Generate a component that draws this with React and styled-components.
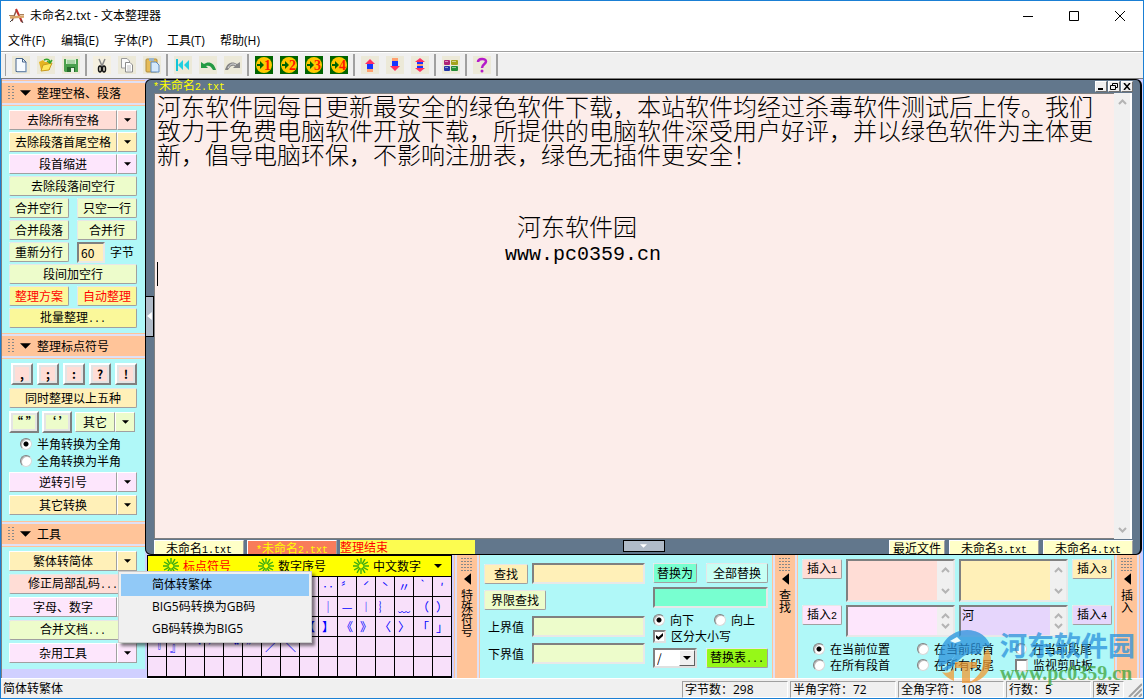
import React, { useState } from "react";
import styled, { createGlobalStyle } from "styled-components";

const ORANGE = "#ffc499";
const CYAN = "#b0f8f8";
const LAVENDER = "#dfe0f4";
const PINK = "#ffddd6";
const CREAM = "#fff0b8";
const LILAC = "#fde6fc";
const LIME = "#edfccb";
const LEMON = "#faf89a";

const GlobalStyle = createGlobalStyle`
  * { box-sizing: border-box; }
  body { margin: 0; }
  button, input, select, textarea {
    font: inherit;
    color: inherit;
    margin: 0;
    padding: 0;
    border-radius: 0;
    outline: none;
  }
`;

const Window = styled.div`
  position: relative;
  display: flex;
  flex-direction: column;
  min-height: 100vh;
  border: 1px solid #1a7fd4;
  background: #f0f0f0;
  color: #000;
  font-family: "Noto Sans CJK SC", sans-serif;
  font-size: 12px;
  line-height: 16px;
`;

const Mono = styled.span`
  font-family: "Liberation Mono", monospace;
  font-size: 10px;
`;

/* title bar and menu */

const TitleBar = styled.header`
  display: flex;
  align-items: center;
  height: 30px;
  padding-left: 8px;
  gap: 5px;
  background: #fff;
  font-family: "Open Sans", "Noto Sans CJK SC", sans-serif;
`;

const Title = styled.h1`
  flex: 1;
  margin: 0;
  font-size: 12px;
  font-weight: 400;
`;

const CaptionButtons = styled.div`
  display: flex;
`;

const CaptionButton = styled.button`
  display: flex;
  align-items: center;
  justify-content: center;
  width: 46px;
  height: 30px;
  border: none;
  background: transparent;
`;

const MenuBar = styled.nav`
  display: flex;
  height: 20px;
  background: #fff;
  font-family: "Open Sans", "Noto Sans CJK SC", sans-serif;
`;

const MenuItem = styled.button`
  width: 53px;
  padding-left: 7px;
  border: none;
  background: transparent;
  text-align: left;
  white-space: nowrap;
`;

/* toolbar */

const Toolbar = styled.div`
  display: flex;
  align-items: center;
  height: 28px;
  border-top: 1px solid #a0a0a0;
  border-bottom: 1px solid #808080;
  box-shadow: inset 0 1px 0 #fff;
`;

const ToolGroup = styled.div`
  display: flex;
  height: 22px;
  padding: 0 2px;
  border-right: 2px solid #a0a0a0;
  &:first-child {
    margin-left: 4px;
    border-left: 1px solid #a0a0a0;
  }
`;

const ToolButton = styled.button`
  display: flex;
  align-items: center;
  justify-content: center;
  width: 25px;
  border: none;
  background: transparent;
`;

/* body */

const Body = styled.div`
  flex: 1;
  display: flex;
`;

const Sidebar = styled.aside`
  flex: none;
  width: 144px;
  padding-top: 1px;
  border-left: 1px solid #808080;
  background: #d0d0ff;
`;

const SectionHead = styled.button`
  display: flex;
  align-items: center;
  width: 100%;
  height: 26px;
  gap: 6px;
  padding: 0 6px;
  border: solid ${ORANGE};
  border-width: 1px 0;
  background: ${ORANGE};
  box-shadow: inset 0 2px 0 ${LAVENDER}, inset 0 -2px 0 ${LAVENDER};
  text-align: left;
`;

const Section = styled.div`
  display: flex;
  flex-direction: column;
  gap: ${(p) => p.$gap}px;
  padding: 4px 8px ${(p) => p.$gap + 3}px 7px;
  background: ${CYAN};
`;

const Row = styled.div`
  position: relative;
  display: flex;
  align-items: center;
  justify-content: ${(p) => (p.$spread ? "space-between" : "flex-start")};
  gap: ${(p) => p.$gap || 0}px;
  padding-left: ${(p) => p.$indent || 0}px;
`;

const Button = styled.button`
  flex: ${(p) => (p.$width ? "none" : 1)};
  width: ${(p) => (p.$width ? p.$width + "px" : "auto")};
  height: 20px;
  border: 1px solid;
  border-color: #fff #a0a0a0 #a0a0a0 #fff;
  border-radius: 2px;
  outline: 1px solid rgba(160, 160, 160, 0.25);
  outline-offset: -1px;
  background: ${(p) => p.$bg || LIME};
  color: ${(p) => p.$color || "#000"};
  line-height: 16px;
  white-space: nowrap;
`;

const SplitPart = styled.button`
  display: flex;
  align-items: center;
  justify-content: center;
  flex: ${(p) => (p.$arrow ? "none" : 1)};
  width: ${(p) => (p.$arrow ? "20px" : "auto")};
  height: 20px;
  border: 1px solid;
  border-color: #fff #a0a0a0 #a0a0a0 #fff;
  background: ${(p) => p.$bg};
  white-space: nowrap;
`;

const SplitBox = styled.div`
  display: flex;
  flex: ${(p) => (p.$width ? "none" : 1)};
  width: ${(p) => (p.$width ? p.$width + "px" : "auto")};
`;

const RaisedButton = styled.button`
  width: ${(p) => p.$width}px;
  height: 22px;
  border: 2px solid;
  border-color: #fff #808080 #808080 #fff;
  box-shadow: inset 0 0 0 2px #e4e4e4;
  background: ${(p) => p.$bg};
  font-weight: 700;
  line-height: 16px;
`;

const Field = styled.input`
  width: ${(p) => (p.$width ? p.$width + "px" : "100%")};
  height: 21px;
  padding: 0 2px;
  border: 2px solid;
  border-color: #808080 #e8e8e8 #e8e8e8 #808080;
  background: ${(p) => p.$bg};
`;

const Choice = styled.label`
  display: flex;
  align-items: center;
  gap: 5px;
  height: 16px;
  white-space: nowrap;
`;

const Radio = styled.input.attrs({ type: "radio" })`
  appearance: none;
  width: 12px;
  height: 12px;
  border: 1px solid;
  border-color: #808080 #d8d8d8 #d8d8d8 #808080;
  border-radius: 50%;
  background: #fff;
  box-shadow: inset 1px 1px 0 #b8b8b8;
  &:checked {
    background: radial-gradient(circle, #000 0 2px, #fff 3px);
  }
`;

const CheckBox = styled.span`
  position: relative;
  display: flex;
  width: 13px;
  height: 13px;
  svg {
    position: absolute;
    left: 3px;
    top: 3px;
    pointer-events: none;
  }
`;

const CheckInput = styled.input.attrs({ type: "checkbox" })`
  appearance: none;
  width: 13px;
  height: 13px;
  border: 2px solid;
  border-color: #808080 #e0e0e0 #e0e0e0 #808080;
  background: #fff;
`;

const RadioGroup = styled.div`
  display: flex;
  flex-direction: column;
  gap: 1px;
  padding-left: 11px;
`;

const Popup = styled.div`
  position: absolute;
  z-index: 2;
  top: 20px;
  left: 109px;
  width: 194px;
  padding: 2px;
  border: 1px solid #ccc;
  background: #f0f0f0;
  box-shadow: 3px 3px 3px rgba(0, 0, 0, 0.5);
  font-family: "Open Sans", "Noto Sans CJK SC", sans-serif;
`;

const PopupItem = styled.button`
  display: block;
  width: 100%;
  height: 22px;
  padding-left: 31px;
  border: none;
  background: ${(p) => (p.$active ? "#91c9f7" : "transparent")};
  text-align: left;
`;

/* editor */

const Main = styled.main`
  flex: 1;
  min-width: 0;
  display: flex;
  flex-direction: column;
  background: #d0d0ff;
`;

const EditorFrame = styled.section`
  flex: 1;
  display: flex;
  flex-direction: column;
  margin-right: 1px;
  border: solid #000;
  border-width: 1px 2px 1px 1px;
  border-radius: 6px;
  background: #62778c;
`;

const EditorTitle = styled.div`
  display: flex;
  align-items: center;
  height: 13px;
  padding: 0 7px;
  color: #ff0;
`;

const EditorName = styled.span`
  flex: 1;
`;

const TinyButton = styled.button`
  display: flex;
  align-items: center;
  justify-content: center;
  width: 12px;
  height: 11px;
  margin-left: 1px;
  border: 1px solid;
  border-color: #fff #707070 #707070 #fff;
  background: #f0f0f0;
`;

const EditorMiddle = styled.div`
  flex: 1;
  display: flex;
  padding-right: 8px;
`;

const EditorGutter = styled.div`
  display: flex;
  align-items: center;
  width: 8px;
`;

const SideHandle = styled.button`
  display: flex;
  align-items: center;
  justify-content: center;
  width: 8px;
  height: 41px;
  border: 1px solid #000;
  border-left: none;
  background: #b0bbc8;
`;

const Paper = styled.div`
  flex: 1;
  padding: 0 0 0 2px;
  border: 1px solid #808080;
  border-right: none;
  background: #fcedea;
  font-size: 24px;
  font-weight: 300;
  line-height: 24px;
  white-space: pre-wrap;
  outline: none;
`;

const PaperLine = styled.p`
  margin: 0;
  min-height: 24px;
  height: ${(p) => (p.$single ? "24px" : "auto")};
`;

const PaperMono = styled.span`
  font-family: "Liberation Mono", monospace;
  font-size: 20px;
  font-weight: 400;
`;

const Caret = styled.span`
  display: block;
  width: 1px;
  height: 24px;
  background: #000;
`;

const ScrollTrack = styled.div`
  display: flex;
  flex: none;
  flex-direction: column;
  justify-content: space-between;
  align-items: center;
  width: ${(p) => (p.$thin ? 16 : 18)}px;
  padding: 6px 0;
  background: #f0f0f0;
  border-right: ${(p) => (p.$thin ? "none" : "2px solid #fff")};
`;

const TabRow = styled.div`
  display: flex;
  align-items: stretch;
  height: 14px;
  padding: 0 7px 0 8px;
  margin-top: 1px;
`;

const TabSide = styled.div`
  flex: 1;
  display: flex;
  gap: ${(p) => (p.$end ? 4 : 3)}px;
  justify-content: ${(p) => (p.$end ? "flex-end" : "flex-start")};
`;

const FileTab = styled.button`
  width: ${(p) => (p.$small ? 56 : 90)}px;
  border: 1px solid;
  border-color: #fff #a0a0a0 #a0a0a0 #fff;
  border-bottom: none;
  background: ${(p) => (p.$active ? "#f87c5a" : "#ffffc8")};
  color: ${(p) => (p.$active ? "#ff0" : "#000")};
  line-height: 14px;
  white-space: nowrap;
`;

const Notice = styled.output`
  width: 135px;
  background: #fcfc50;
  color: #f00;
  line-height: 14px;
`;

const BottomHandle = styled.button`
  display: flex;
  align-items: center;
  justify-content: center;
  width: 42px;
  height: 12px;
  border: 1px solid #000;
  background: #b0bbc8;
`;

/* bottom docks */

const Docks = styled.div`
  display: flex;
  height: 123px;
  padding: 0 3px 0 2px;
`;

const SymbolPanel = styled.section`
  flex: none;
  width: 305px;
  border-top: 1px solid #000;
  background: #000;
`;

const SymbolHead = styled.div`
  display: flex;
  align-items: center;
  height: 20px;
  padding-left: 15px;
  border-left: 1px solid #000;
  border-right: 1px solid #000;
  background: #ff0;
`;

const SymbolTab = styled.button`
  display: flex;
  align-items: center;
  gap: 4px;
  width: 95px;
  border: none;
  background: transparent;
  color: ${(p) => (p.$active ? "#f00" : "#000")};
  margin-right: ${(p) => (p.$last ? "-14px" : 0)};
`;

const PlainButton = styled.button`
  display: flex;
  border: none;
  background: transparent;
`;

const SymbolGrid = styled.div`
  display: grid;
  grid-template-columns: repeat(16, 18px);
  grid-auto-rows: 19px;
  gap: 1px;
  padding: 1px;
`;

const SymbolKey = styled.button`
  border: none;
  background: #f8e0fa;
  color: #00f;
  line-height: 18px;
  overflow: hidden;
`;

const Strip = styled.button`
  display: flex;
  flex-direction: column;
  align-items: center;
  flex: none;
  width: 26px;
  margin-left: ${(p) => p.$gap || 0}px;
  padding-top: 3px;
  border: solid ${ORANGE};
  border-width: 0 1px;
  background: ${ORANGE};
  box-shadow: inset 2px 0 0 ${LAVENDER}, inset -2px 0 0 ${LAVENDER};
`;

const StripText = styled.span`
  width: 12px;
  margin-top: 4px;
  line-height: 12px;
  word-break: break-all;
`;

const SearchPanel = styled.section`
  display: flex;
  flex: none;
  width: 292px;
  gap: 8px;
  padding: 8px 4px;
  background: ${CYAN};
`;

const SearchColumn = styled.div`
  display: flex;
  flex-direction: column;
  gap: ${(p) => p.$gap}px;
  width: ${(p) => p.$width}px;
`;

const FieldLabel = styled.label`
  flex: none;
  width: 44px;
  padding-left: 4px;
`;

const SelectBox = styled.span`
  position: relative;
  display: flex;
`;

const Select = styled.select`
  appearance: none;
  width: 44px;
  height: 20px;
  padding-left: 2px;
  border: 2px solid;
  border-color: #808080 #e0e0e0 #e0e0e0 #808080;
  background: #fff;
`;

const SelectArrow = styled.span`
  position: absolute;
  right: 2px;
  top: 2px;
  display: flex;
  align-items: center;
  justify-content: center;
  width: 16px;
  height: 16px;
  border: 1px solid;
  border-color: #fff #606060 #606060 #fff;
  background: #f0f0f0;
  pointer-events: none;
`;

const InsertPanel = styled.section`
  flex: 1;
  min-width: 0;
  padding: 4px 2px 4px 4px;
  background: ${CYAN};
`;

const InsertGrid = styled.div`
  display: grid;
  grid-template-columns: 40px minmax(0, 1fr) minmax(0, 1fr) 40px;
  grid-template-rows: 43px 32px;
  gap: 3px 4px;
`;

const AreaBox = styled.div`
  display: flex;
  min-width: 0;
  border: 2px solid;
  border-color: #808080 #e8e8e8 #e8e8e8 #808080;
`;

const Area = styled.textarea`
  flex: 1;
  min-width: 0;
  height: 100%;
  border: none;
  padding: 0 1px;
  resize: none;
  overflow: hidden;
  background: ${(p) => p.$bg};
`;

const ChoiceGrid = styled.div`
  display: grid;
  grid-template-columns: 104px 98px 1fr;
  padding: 4px 0 0 11px;
`;

/* status bar */

const StatusBar = styled.footer`
  display: flex;
  align-items: center;
  height: 20px;
  gap: 2px;
  padding: 1px 1px 0 2px;
  border-top: 1px solid #fff;
  font-family: "Open Sans", "Noto Sans CJK SC", sans-serif;
`;

const StatusText = styled.span`
  flex: 1;
`;

const StatusCell = styled.span`
  width: ${(p) => p.$width}px;
  height: 17px;
  padding-left: 2px;
  border: 1px solid;
  border-color: #a0a0a0 #fff #fff #a0a0a0;
  white-space: nowrap;
`;

/* watermark */

const Watermark = styled.div`
  position: absolute;
  z-index: 3;
  right: 8px;
  bottom: 13px;
  display: flex;
  gap: 6px;
  pointer-events: none;
  opacity: 0.75;
`;

const WatermarkText = styled.div`
  font-size: 27px;
  font-weight: 700;
  line-height: 32px;
  color: #2a92dc;
`;

const WatermarkUrl = styled.div`
  font-family: "Liberation Serif", serif;
  font-size: 20px;
  font-weight: 700;
  line-height: 24px;
  color: #3fa53c;
`;

const Down = ({ size = 7, color = "#000" }) => (
  <svg width={size} height={Math.ceil(size / 2)} viewBox="0 0 8 4">
    <path d="M0 0h8L4 4z" fill={color} />
  </svg>
);

const Left = ({ w = 7, h = 12, color = "#000" }) => (
  <svg width={w} height={h} viewBox="0 0 6 10">
    <path d="M6 0v10L0 5z" fill={color} />
  </svg>
);

const Chevron = ({ up }) => (
  <svg width="9" height="6" viewBox="0 0 9 6">
    <path
      d={up ? "M1 5l3.500-3.500L8 5" : "M1 1l3.500 3.500L8 1"}
      fill="none"
      stroke="#b4b4b4"
      strokeWidth="2"
    />
  </svg>
);

const Grip = ({ cols, rows }) => (
  <svg width={cols * 3} height={rows * 3}>
    {Array.from({ length: cols * rows }, (_, i) => (
      <rect
        key={i}
        x={(i % cols) * (cols === 2 ? 4 : 3)}
        y={Math.floor(i / cols) * 3}
        width="2"
        height="1"
        fill="#888"
      />
    ))}
  </svg>
);

const Burst = () => (
  <svg width="16" height="16" viewBox="0 0 15 15" stroke="#3cae12" strokeWidth="1.300">
    {[0, 30, 60, 90, 120, 150].map((a) => (
      <path
        key={a}
        d="M7.500 0v5.500M7.500 9.500v5.500"
        transform={`rotate(${a} 7.500 7.500)`}
      />
    ))}
  </svg>
);

const AppIcon = () => (
  <svg width="16" height="16" viewBox="0 0 16 16" fill="none">
    <path d="M7.500 2L3 13" stroke="#8c5a4c" strokeWidth="1.500" />
    <path d="M7 1l6 13" stroke="#c22f2a" strokeWidth="2" />
    <path d="M1 9.500l14-1" stroke="#d8a468" strokeWidth="2.500" />
    <path d="M0 7.500h5M11 6.500h4" stroke="#a8805c" />
    <path d="M1 14l3-3M12 12l2 3" stroke="#444" />
  </svg>
);

const Tile = ({ bg = "#ece9d8", children }) => (
  <svg width="18" height="18" viewBox="0 0 18 18" fill="none">
    <rect width="18" height="18" fill={bg} />
    {children}
  </svg>
);

const icons = {
  新建: (
    <Tile>
      <path d="M4 2.500h6.500L14 6v9.500H4z" fill="#f6fbff" stroke="#46658c" />
      <path d="M10.500 2.500V6H14" stroke="#46658c" />
      <path d="M14.500 7v9H5" stroke="#9db4cc" />
    </Tile>
  ),
  打开: (
    <Tile>
      <path d="M2 6l4-2 2 2h5v8H4z" fill="#e5b321" />
      <path d="M4 15l2-6 9-2-3 7z" fill="#ffe65c" stroke="#c8991c" />
      <path d="M7 4c4-2 6 0 6 3M10 5l3 2 2-3" stroke="#35a52b" strokeWidth="1.500" />
    </Tile>
  ),
  保存: (
    <Tile>
      <path d="M2 3h14v13H3l-1-1z" fill="#4ba04d" />
      <path d="M4 3h10v5H4z" fill="#d4f0cd" />
      <path d="M5 5h8M5 7h8" stroke="#80b77e" />
      <path d="M5 11h8v5H5z" fill="#266b2c" />
      <path d="M9 12h3v4H9z" fill="#ebf5e6" />
    </Tile>
  ),
  剪切: (
    <Tile bg="#f5f0e0">
      <path d="M6 3l3.500 8M12 3L8.500 11" stroke="#888" strokeWidth="1.500" />
      <ellipse cx="7" cy="13" rx="1.500" ry="3" stroke="#111" strokeWidth="1.500" />
      <ellipse cx="11" cy="13" rx="1.500" ry="3" stroke="#111" strokeWidth="1.500" />
    </Tile>
  ),
  复制: (
    <Tile>
      <path d="M3.500 2.500H9L11.500 5v7h-8z" fill="#fafafa" stroke="#9b9b9b" />
      <path d="M7.500 6.500H12l2.500 2.500v7h-7z" fill="#fff" stroke="#8b8b8b" />
      <path d="M9 10h4M9 12h4M9 14h4" stroke="#c2c2c2" />
    </Tile>
  ),
  粘贴: (
    <Tile>
      <rect x="3" y="3" width="11" height="13" rx="1" fill="#e6bc58" stroke="#b08c3c" />
      <path d="M6 2h5v3H6z" fill="#9db7cf" />
      <path d="M8 6h5l3 3v7H8z" fill="#d4e8fc" stroke="#5d8ac0" />
    </Tile>
  ),
  首行: (
    <Tile>
      <path d="M3 3v12" stroke="#13c4d8" strokeWidth="2" />
      <path d="M9 4v10L4 9zM15 4v10l-5-5z" fill="#20cfe0" />
    </Tile>
  ),
  撤销: (
    <Tile>
      <path d="M2 6v6h7L7 10c3-1 5 0 7 4h3C15 6 9 5 5 8z" fill="#249a43" />
    </Tile>
  ),
  重做: (
    <Tile>
      <path d="M16 6v6H9l2-2c-3-1-5 0-7 4H1C3 6 9 5 13 8z" fill="#858585" />
      <path d="M4 12c2-4 5-5 8-3" stroke="#e4e4e4" />
    </Tile>
  ),
  上移: (
    <Tile>
      <path d="M9 3l5 5H4z" fill="#ff2f62" />
      <path d="M6 8h6v5H6z" fill="#1536ff" />
      <path d="M6 13h6v3H6z" fill="#ffa070" />
    </Tile>
  ),
  下移: (
    <Tile>
      <path d="M6 2h6v3H6z" fill="#ffa070" />
      <path d="M6 5h6v5H6z" fill="#1536ff" />
      <path d="M4 10h10l-5 5z" fill="#ff2f62" />
    </Tile>
  ),
  居中: (
    <Tile>
      <path d="M9 2l5 4H4zM4 12h10l-5 4z" fill="#ff2f62" />
      <path d="M6 6h6v2H6zM6 10h6v2H6z" fill="#1536ff" />
      <path d="M6 9h6" stroke="#ffa070" strokeWidth="2" />
    </Tile>
  ),
  配色: (
    <Tile>
      <rect x="2" y="4" width="6" height="5" rx="1" fill="#ad2378" />
      <rect x="9" y="4" width="7" height="5" rx="1" fill="#a3a31d" />
      <rect x="2" y="10" width="6" height="5" rx="1" fill="#2537a8" />
      <rect x="9" y="10" width="7" height="5" rx="1" fill="#248d35" />
      <path d="M3 5.500h3M10 5.500h4M3 11.500h3M10 11.500h4" stroke="#fff" opacity=".5" />
    </Tile>
  ),
  帮助: (
    <Tile>
      <path
        d="M5 6c0-4 8-4 8-.5C13 8 9 8 9 12"
        stroke="#b51bc9"
        strokeWidth="2.500"
      />
      <circle cx="9" cy="15" r="1.500" fill="#b51bc9" />
    </Tile>
  ),
};

[1, 2, 3, 4].forEach((n) => {
  icons["方案" + n] = (
    <Tile bg="#006400">
      <circle cx="9" cy="9" r="8" fill="#ffc800" />
      <path d="M2 8h3V5l4 4-4 4v-3H2z" fill="#006400" />
      <text
        x="9"
        y="14"
        fill="#ff1800"
        stroke="none"
        fontFamily="Liberation Serif, serif"
        fontWeight="700"
        fontSize="14"
      >
        {n}
      </text>
    </Tile>
  );
});

const toolGroups = [
  ["新建", "打开", "保存"],
  ["剪切", "复制", "粘贴"],
  ["首行", "撤销", "重做"],
  ["方案1", "方案2", "方案3", "方案4"],
  ["上移", "下移", "居中"],
  ["配色"],
  ["帮助"],
];

// the first cells of the upper rows stay empty while the menu is open over them
const blank = (n) => Array(n).fill("");
const symbols = [
  ...blank(8), "．", "‥", "〞", "ˊ", "ˋ", "〃", "‵", "′",
  ...blank(8), "┤", "｜", "—", "︱", "︴", "﹏", "（", "）",
  ...blank(8), "【", "】", "《", "》", "〈", "〉", "「", "」",
  "『", "』", "‘", "’", "“", "”", "／", "＼",
  ...blank(24),
];

function Split({ bg, width, children }) {
  return (
    <SplitBox $width={width}>
      <SplitPart $bg={bg}>{children}</SplitPart>
      <SplitPart $bg={bg} $arrow aria-label="更多">
        <Down />
      </SplitPart>
    </SplitBox>
  );
}

function Head({ children }) {
  return (
    <SectionHead>
      <Grip cols={2} rows={5} />
      <Down size={11} />
      {children}
    </SectionHead>
  );
}

function DockStrip({ gap, children }) {
  return (
    <Strip $gap={gap}>
      <Grip cols={4} rows={5} />
      <Left />
      <StripText>{children}</StripText>
    </Strip>
  );
}

function InsertArea({ bg, label, text = "" }) {
  return (
    <AreaBox>
      <Area $bg={bg} aria-label={label} defaultValue={text} />
      <ScrollTrack $thin>
        <Chevron up />
        <Chevron />
      </ScrollTrack>
    </AreaBox>
  );
}

function Check({ checked, onChange, children }) {
  return (
    <Choice>
      <CheckBox>
        <CheckInput checked={checked} onChange={onChange} />
        {checked && (
          <svg width="7" height="7" viewBox="0 0 7 7">
            <path d="M0 2l2.500 2L7 0v3L2.500 7 0 5z" />
          </svg>
        )}
      </CheckBox>
      {children}
    </Choice>
  );
}

export default function App() {
  const [matchCase, setMatchCase] = useState(true);
  const [watch, setWatch] = useState(false);

  return (
    <Window>
      <GlobalStyle />
      <TitleBar>
        <AppIcon />
        <Title>未命名2.txt - 文本整理器</Title>
        <CaptionButtons>
          <CaptionButton aria-label="最小化">
            <svg width="10" height="10"><path d="M0 5.500h10" stroke="#000" /></svg>
          </CaptionButton>
          <CaptionButton aria-label="最大化">
            <svg width="10" height="10"><path d="M.5.5h9v9h-9z" fill="none" stroke="#000" /></svg>
          </CaptionButton>
          <CaptionButton aria-label="关闭">
            <svg width="10" height="10"><path d="M0 0l10 10M10 0L0 10" stroke="#000" /></svg>
          </CaptionButton>
        </CaptionButtons>
      </TitleBar>
      <MenuBar>
        {["文件(F)", "编辑(E)", "字体(P)", "工具(T)", "帮助(H)"].map((m) => (
          <MenuItem key={m}>{m}</MenuItem>
        ))}
      </MenuBar>
      <Toolbar>
        {toolGroups.map((group) => (
          <ToolGroup key={group[0]}>
            {group.map((name) => (
              <ToolButton key={name} aria-label={name}>
                {icons[name]}
              </ToolButton>
            ))}
          </ToolGroup>
        ))}
      </Toolbar>

      <Body>
        <Sidebar>
          <Head>整理空格、段落</Head>
          <Section $gap={2}>
            <Split bg={PINK}>去除所有空格</Split>
            <Split bg={CREAM}>去除段落首尾空格</Split>
            <Split bg={LILAC}>段首缩进</Split>
            <Row><Button>去除段落间空行</Button></Row>
            <Row $gap={8}>
              <Button>合并空行</Button>
              <Button>只空一行</Button>
            </Row>
            <Row $gap={8}>
              <Button>合并段落</Button>
              <Button>合并行</Button>
            </Row>
            <Row $gap={8}>
              <Button $width={60}>重新分行</Button>
              <Choice>
                <Field $width={28} $bg={CREAM} defaultValue="60" />
                字节
              </Choice>
            </Row>
            <Row><Button>段间加空行</Button></Row>
            <Row $gap={8}>
              <Button $bg={LEMON} $color="#f00">整理方案</Button>
              <Button $bg={LEMON} $color="#f00">自动整理</Button>
            </Row>
            <Row><Button $bg={LEMON}>批量整理<Mono>...</Mono></Button></Row>
          </Section>

          <Head>整理标点符号</Head>
          <Section $gap={3}>
            <Row $gap={4} $indent={2}>
              {[",", ";", ":", "?", "!"].map((c) => (
                <RaisedButton key={c} $width={22} $bg={PINK}>{c}</RaisedButton>
              ))}
            </Row>
            <Row><Button $bg={CREAM}>同时整理以上五种</Button></Row>
            <Row $gap={3}>
              <RaisedButton $width={30} $bg={LIME}>“ ”</RaisedButton>
              <RaisedButton $width={30} $bg={LIME}>‘ ’</RaisedButton>
              <Split bg={LIME} width={60}>其它</Split>
            </Row>
            <RadioGroup>
              <Choice><Radio name="width" defaultChecked />半角转换为全角</Choice>
              <Choice><Radio name="width" />全角转换为半角</Choice>
            </RadioGroup>
            <Split bg={LILAC}>逆转引号</Split>
            <Split bg={CREAM}>其它转换</Split>
          </Section>

          <Head>工具</Head>
          <Section $gap={3}>
            <Row>
              <Split bg={CREAM}>繁体转简体</Split>
              <Popup>
                <PopupItem $active>简体转繁体</PopupItem>
                <PopupItem>BIG5码转换为GB码</PopupItem>
                <PopupItem>GB码转换为BIG5</PopupItem>
              </Popup>
            </Row>
            <Row><Button $bg={PINK}>修正局部乱码<Mono>...</Mono></Button></Row>
            <Split bg={LILAC}>字母、数字</Split>
            <Row><Button>合并文档<Mono>...</Mono></Button></Row>
            <Split bg={LILAC}>杂用工具</Split>
          </Section>
        </Sidebar>

        <Main>
          <EditorFrame>
            <EditorTitle>
              <EditorName><Mono>*</Mono>未命名<Mono>2.txt</Mono></EditorName>
              <TinyButton aria-label="最小化文档">
                <svg width="8" height="7"><path d="M1 5h5v2H1z" /></svg>
              </TinyButton>
              <TinyButton aria-label="还原文档">
                <svg width="8" height="7" fill="none" stroke="#000">
                  <path d="M2.500 3V.5h5v4H6M.5 2.500h5v4h-5z" />
                </svg>
              </TinyButton>
              <TinyButton aria-label="关闭文档">
                <svg width="8" height="7"><path d="M1 0l6 7M7 0L1 7" stroke="#000" strokeWidth="1.500" /></svg>
              </TinyButton>
            </EditorTitle>
            <EditorMiddle>
              <EditorGutter>
                <SideHandle aria-label="收起侧栏">
                  <Left w={5} h={8} color="#fff" />
                </SideHandle>
              </EditorGutter>
              <Paper
                role="textbox"
                aria-label="正文"
                aria-multiline="true"
                contentEditable
                suppressContentEditableWarning
                spellCheck={false}
              >
                <PaperLine>
                  河东软件园每日更新最安全的绿色软件下载，本站软件均经过杀毒软件测试后上传。我们致力于免费电脑软件开放下载，所提供的电脑软件深受用户好评，并以绿色软件为主体更新，倡导电脑环保，不影响注册表，绿色无插件更安全！
                </PaperLine>
                <PaperLine />
                <PaperLine />
                <PaperLine $single>{"\u3000".repeat(15)}河东软件园</PaperLine>
                <PaperLine $single>
                  <PaperMono>{" ".repeat(29)}www.pc0359.cn</PaperMono>
                </PaperLine>
                <PaperLine><Caret /></PaperLine>
              </Paper>
              <ScrollTrack>
                <Chevron up />
                <Chevron />
              </ScrollTrack>
            </EditorMiddle>
            <TabRow>
              <TabSide>
                <FileTab>未命名<Mono>1.txt</Mono></FileTab>
                <FileTab $active><Mono>*</Mono>未命名<Mono>2.txt</Mono></FileTab>
                <Notice>整理结束</Notice>
              </TabSide>
              <BottomHandle aria-label="收起底栏">
                <Down color="#fff" />
              </BottomHandle>
              <TabSide $end>
                <FileTab $small>最近文件</FileTab>
                <FileTab>未命名<Mono>3.txt</Mono></FileTab>
                <FileTab>未命名<Mono>4.txt</Mono></FileTab>
              </TabSide>
            </TabRow>
          </EditorFrame>

          <Docks>
            <SymbolPanel>
              <SymbolHead>
                <SymbolTab $active><Burst />标点符号</SymbolTab>
                <SymbolTab><Burst />数字序号</SymbolTab>
                <SymbolTab $last><Burst />中文数字</SymbolTab>
                <PlainButton aria-label="更多符号"><Down size={8} /></PlainButton>
              </SymbolHead>
              <SymbolGrid>
                {symbols.map((s, i) => (
                  <SymbolKey key={i}>{s}</SymbolKey>
                ))}
              </SymbolGrid>
            </SymbolPanel>
            <DockStrip gap={2}>特殊符号</DockStrip>

            <SearchPanel>
              <SearchColumn $width={161} $gap={6}>
                <Row $gap={4}>
                  <Button $width={44} $bg={CREAM}>查找</Button>
                  <Field $bg={CREAM} aria-label="查找" />
                </Row>
                <Row><Button $width={62}>界限查找</Button></Row>
                <Row $gap={4}>
                  <FieldLabel htmlFor="upper">上界值</FieldLabel>
                  <Field id="upper" $bg={LIME} />
                </Row>
                <Row $gap={4}>
                  <FieldLabel htmlFor="lower">下界值</FieldLabel>
                  <Field id="lower" $bg={LIME} />
                </Row>
              </SearchColumn>
              <SearchColumn $width={115} $gap={4}>
                <Row $spread>
                  <Button $width={44} $bg="#78ffd0">替换为</Button>
                  <Button $width={62} $bg="#c8fff4">全部替换</Button>
                </Row>
                <Field $bg="#78ffd0" aria-label="替换为" />
                <div>
                  <Row $gap={20}>
                    <Choice><Radio name="dir" defaultChecked />向下</Choice>
                    <Choice><Radio name="dir" />向上</Choice>
                  </Row>
                  <Check checked={matchCase} onChange={(e) => setMatchCase(e.target.checked)}>
                    区分大小写
                  </Check>
                </div>
                <Row $spread>
                  <SelectBox>
                    <Select aria-label="分隔符">
                      <option>/</option>
                    </Select>
                    <SelectArrow><Down size={8} /></SelectArrow>
                  </SelectBox>
                  <Button $width={62} $bg="#96f818">替换表<Mono>...</Mono></Button>
                </Row>
              </SearchColumn>
            </SearchPanel>
            <DockStrip>查找</DockStrip>

            <InsertPanel>
              <InsertGrid>
                <Button $bg={PINK}>插入<Mono>1</Mono></Button>
                <InsertArea bg={PINK} label="插入1内容" />
                <InsertArea bg={CREAM} label="插入3内容" />
                <Button $bg={CREAM}>插入<Mono>3</Mono></Button>
                <Button $bg={LILAC}>插入<Mono>2</Mono></Button>
                <InsertArea bg={LILAC} label="插入2内容" />
                <InsertArea bg="#e6d6fc" label="插入4内容" text="河" />
                <Button $bg="#e6d6fc">插入<Mono>4</Mono></Button>
              </InsertGrid>
              <ChoiceGrid>
                <Choice><Radio name="place" defaultChecked />在当前位置</Choice>
                <Choice><Radio name="place" />在当前段首</Choice>
                <Choice><Radio name="place" />在当前段尾</Choice>
                <Choice><Radio name="place" />在所有段首</Choice>
                <Choice><Radio name="place" />在所有段尾</Choice>
                <Check checked={watch} onChange={(e) => setWatch(e.target.checked)}>
                  监视剪贴板
                </Check>
              </ChoiceGrid>
            </InsertPanel>
            <DockStrip>插入</DockStrip>
          </Docks>
        </Main>
      </Body>

      <StatusBar>
        <StatusText>简体转繁体</StatusText>
        <StatusCell $width={106}>字节数：298</StatusCell>
        <StatusCell $width={106}>半角字符：72</StatusCell>
        <StatusCell $width={106}>全角字符：108</StatusCell>
        <StatusCell $width={85}>行数：5</StatusCell>
        <StatusCell $width={31}>数字</StatusCell>
        <svg width="16" height="16">
          <path d="M3 16L16 3M8 16l8-8M13 16l3-3" stroke="#a0a0a0" strokeWidth="2" />
        </svg>
      </StatusBar>

      <Watermark>
        <svg width="56" height="56" viewBox="0 0 56 56">
          <path d="M1 38C-2 16 12 1 29 1c12 0 21 7 24 17l-8-1c-3 6-8 3-13 3-8 0-13 3-17 9-4 5-9 7-14 9z" fill="#2a92dc" />
          <path d="M3 40c5-1 9-6 12-11 3-5 8-9 17-9l14-3-4 8H31c-7 1-11 8-17 13-3 3-7 4-11 2z" fill="#2a92dc" />
          <path d="M50 20c9 16-3 33-19 34 9-6 14-12 14-21 0-5 1-10 5-13z" fill="#f29a32" />
          <path d="M17 33h22v6h-7v15h-8V39h-7z" fill="#f29a32" />
          <path d="M4 43c5 2 9 0 12-4v13c-5-2-9-5-12-9z" fill="#f29a32" />
          <path d="M12 12l7-4 4 4-6 2z" fill="#fff" />
        </svg>
        <div>
          <WatermarkText>河东软件园</WatermarkText>
          <WatermarkUrl>www.pc0359.cn</WatermarkUrl>
        </div>
      </Watermark>
    </Window>
  );
}
